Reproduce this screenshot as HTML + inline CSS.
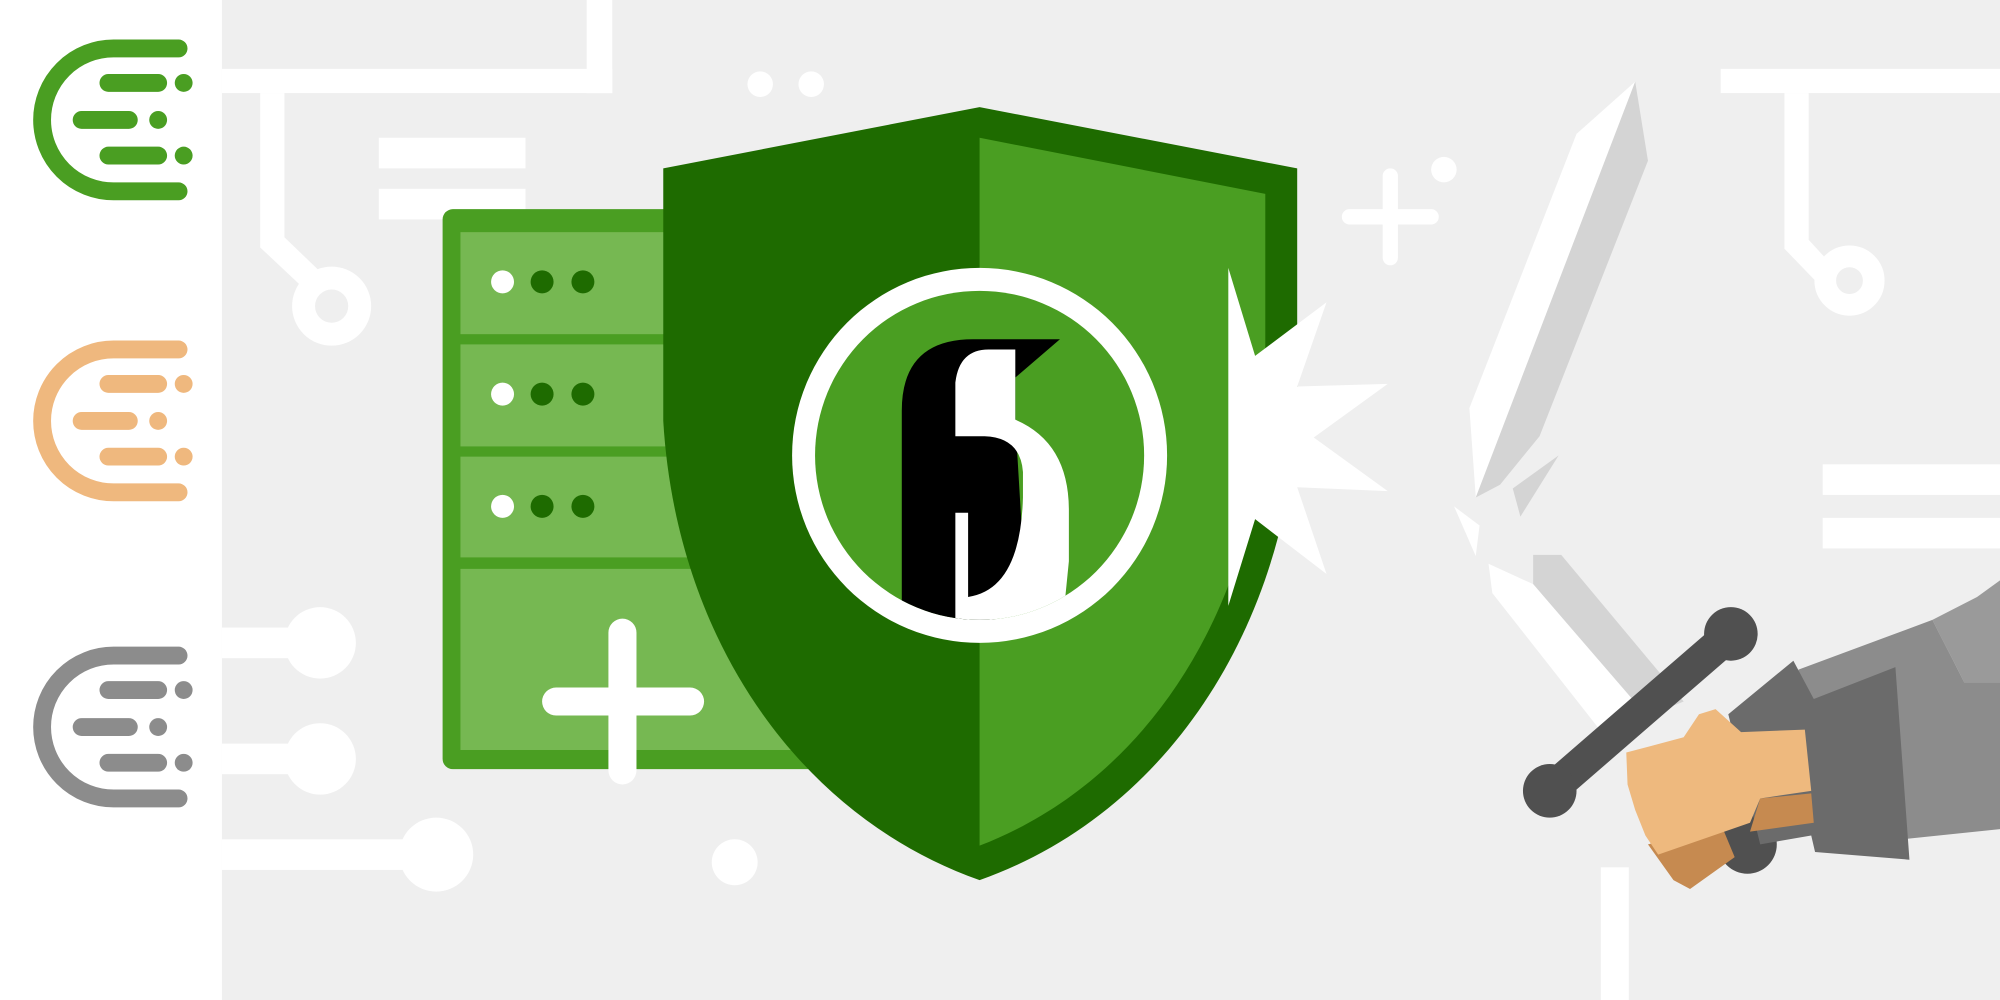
<!DOCTYPE html>
<html><head><meta charset="utf-8"><style>
html,body{margin:0;padding:0;width:2000px;height:1000px;overflow:hidden;background:#efefef}
svg{display:block}
</style></head><body>
<svg width="2000" height="1000" viewBox="0 0 1568 784" xmlns="http://www.w3.org/2000/svg">
<defs>
<g id="ico" fill="none" stroke-linecap="round">
<path d="M140,38 H89 A56,56 0 0 0 89,150 H140" stroke-width="14"/>
<path d="M85,65 H124 M64,94 H101 M85,122 H124" stroke-width="14"/>
</g>
<clipPath id="cc"><circle cx="768" cy="357" r="129"/></clipPath>
</defs>
<rect width="1568" height="784" fill="#efefef"/>
<rect width="174" height="784" fill="#fff"/>
<!-- left icons -->
<g stroke="#4a9e22"><use href="#ico"/></g>
<g fill="#4a9e22"><circle cx="144" cy="65" r="7"/><circle cx="124" cy="94" r="7"/><circle cx="144" cy="122" r="7"/></g>
<g stroke="#efb87e" transform="translate(0,236)"><use href="#ico"/></g>
<g fill="#efb87e" transform="translate(0,236)"><circle cx="144" cy="65" r="7"/><circle cx="124" cy="94" r="7"/><circle cx="144" cy="122" r="7"/></g>
<g stroke="#8c8c8c" transform="translate(0,476)"><use href="#ico"/></g>
<g fill="#8c8c8c" transform="translate(0,476)"><circle cx="144" cy="65" r="7"/><circle cx="124" cy="94" r="7"/><circle cx="144" cy="122" r="7"/></g>
<!-- circuits -->
<g fill="#fff">
<rect x="174" y="54" width="306" height="19"/><rect x="460" y="0" width="20" height="73"/>
<path d="M204,73 H223 V186 L250,212 L237,225 L204,194 Z"/>
<rect x="297" y="108" width="115" height="24"/><rect x="297" y="148" width="115" height="24"/>
<circle cx="596" cy="66" r="10"/><circle cx="636" cy="66" r="10"/>
<rect x="174" y="492" width="60" height="24"/><circle cx="251" cy="504" r="28"/>
<rect x="174" y="583" width="60" height="24"/><circle cx="251" cy="595" r="28"/>
<rect x="174" y="658" width="150" height="24"/><circle cx="342" cy="670" r="29"/>
<circle cx="576" cy="676" r="18"/>
<circle cx="1132" cy="133" r="10"/>
<rect x="1349" y="54" width="219" height="19"/>
<path d="M1399,73 H1418 V188 L1440,212 L1427,224 L1399,195 Z"/>
<rect x="1429" y="364" width="139" height="24"/><rect x="1429" y="406" width="139" height="24"/>
<rect x="1255" y="680" width="22" height="104"/>
</g>
<circle cx="260" cy="240" r="22" fill="none" stroke="#fff" stroke-width="18"/>
<circle cx="1450" cy="220" r="19" fill="none" stroke="#fff" stroke-width="17"/>
<path d="M1090,138 V202 M1058,170 H1122" stroke="#fff" stroke-width="12" stroke-linecap="round"/>
<!-- server -->
<rect x="347" y="164" width="300" height="439" rx="8" fill="#4a9e22"/>
<g fill="#76b852">
<rect x="361" y="182" width="290" height="80"/><rect x="361" y="270" width="290" height="80"/>
<rect x="361" y="358" width="290" height="79"/><rect x="361" y="446" width="290" height="142"/>
</g>
<g><circle cx="394" cy="221" r="9" fill="#fff"/><circle cx="425" cy="221" r="9" fill="#1e6b00"/><circle cx="457" cy="221" r="9" fill="#1e6b00"/>
<circle cx="394" cy="309" r="9" fill="#fff"/><circle cx="425" cy="309" r="9" fill="#1e6b00"/><circle cx="457" cy="309" r="9" fill="#1e6b00"/>
<circle cx="394" cy="397" r="9" fill="#fff"/><circle cx="425" cy="397" r="9" fill="#1e6b00"/><circle cx="457" cy="397" r="9" fill="#1e6b00"/></g>
<path d="M488,496 V604 M436,550 H541" stroke="#fff" stroke-width="22" stroke-linecap="round"/>
<!-- shield -->
<path d="M520,132 L768,84 L1017,132 L1017,330 C1005,500 910,640 768,690 C626,640 530,500 520,330 Z" fill="#1e6b00"/>
<path d="M768,108 L992,152 L992,330 C980,480 900,612 768,663 Z" fill="#4a9e22"/>
<circle cx="768" cy="357" r="147" fill="#fff"/>
<circle cx="768" cy="357" r="129" fill="#4a9e22"/>
<g clip-path="url(#cc)">
<path d="M707,480 V322 Q707,266 763,266 H831 L796,296 V330 L805,480 L749,492 Z" fill="#000"/>
<path d="M749,510 V402 H759 V468 Q800,462 802,390 V370 Q800,343 772,342 H749 V300 Q752,274 775,274 H796 V329 Q838,347 838,400 V440 L835,470 L820,510 Z" fill="#fff"/>
</g>
<!-- burst -->
<polygon points="963,210 984,279 1040,237 1017,303 1088,301 1030,343 1088,385 1017,382 1040,450 984,407 963,475" fill="#fff"/>
<!-- swords -->
<polygon points="1282,64 1236,105 1152,320 1157,390 1282,64" fill="#fff"/>
<polygon points="1282,64 1292,126 1207,342 1176,380 1157,390" fill="#d4d4d4"/>
<polygon points="1186,383 1222,357 1192,405" fill="#d4d4d4"/>
<polygon points="1140,397 1160,412 1157,436" fill="#fff"/>
<polygon points="1202,435 1224,435 1320,550 1290,562 1202,458" fill="#d4d4d4"/>
<polygon points="1167,442 1202,458 1290,560 1262,582 1170,465" fill="#fff"/>
<path d="M1215,620 L1357,497" stroke="#505050" stroke-width="26"/>
<circle cx="1215" cy="620" r="21" fill="#505050"/><circle cx="1357" cy="497" r="21" fill="#505050"/>
<circle cx="1370" cy="662" r="23" fill="#505050"/>
<!-- arm -->
<polygon points="1515,486 1550,468 1568,455 1568,535 1540,535" fill="#9a9a9a"/>
<polygon points="1410,525 1515,486 1540,535 1568,535 1568,650 1425,665" fill="#8c8c8c"/>
<polygon points="1355,560 1406,518 1422,548 1486,523 1497,674 1423,668 1420,655 1380,662" fill="#6b6b6b"/>
<polygon points="1380,626 1420,622 1422,645 1372,652" fill="#c68a50"/>
<polygon points="1292,662 1350,648 1360,672 1325,697 1312,690" fill="#c68a50"/>
<path d="M1275,590 L1320,578 L1332,560 L1345,556 L1365,574 L1415,572 L1420,620 L1380,626 L1372,645 L1300,670 L1290,655 L1282,635 L1276,615 Z" fill="#eeb97e"/>
</svg>
</body></html>
